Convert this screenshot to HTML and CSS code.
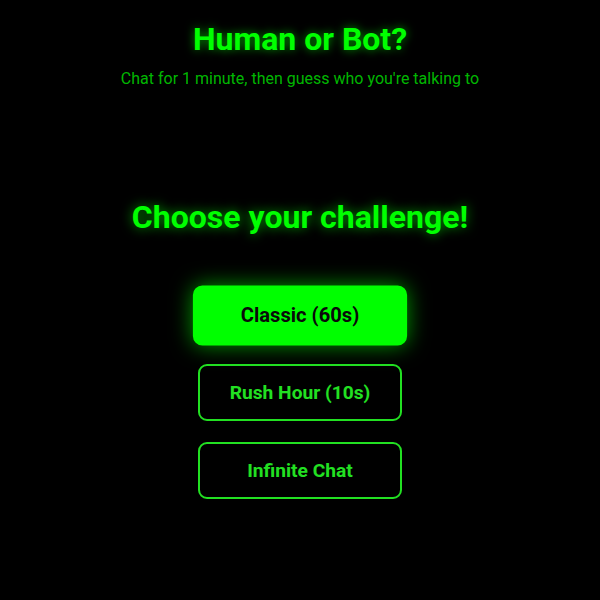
FILE: index.html
```html
<!DOCTYPE html>
<html lang="en">
<head>
<meta charset="utf-8">
<title>Human or Bot?</title>
<link rel="stylesheet" href="styles.css">
</head>
<body>
<header class="header">
  <h1 class="title">Human or Bot?</h1>
  <p class="subtitle">Chat for 1 minute, then guess who you're talking to</p>
</header>
<main class="main">
  <h2 class="challenge">Choose your challenge!</h2>
  <div class="modes">
    <button class="mode mode-active">Classic (60s)</button>
    <button class="mode">Rush Hour (10s)</button>
    <button class="mode">Infinite Chat</button>
  </div>
</main>
</body>
</html>
```
FILE: styles.css
```css
html, body {
  margin: 0;
  padding: 0;
  background: #000;
  height: 100%;
}
body {
  font-family: Roboto, "Liberation Sans", sans-serif;
  color: #00ff00;
  display: flex;
  flex-direction: column;
  align-items: center;
}
.header {
  padding-top: 21px;
  text-align: center;
}
.title {
  margin: 0;
  font-size: 32px;
  font-weight: 700;
  line-height: 37.5px;
  color: #00ff00;
  text-shadow: 0 0 10px rgba(0, 255, 0, 0.6);
}
.subtitle {
  margin: 10px 0 0;
  font-size: 16px;
  line-height: 19px;
  color: rgba(0, 255, 0, 0.72);
}
.main {
  display: flex;
  flex-direction: column;
  align-items: center;
  margin-top: 111px;
}
.challenge {
  margin: 0;
  font-size: 32px;
  font-weight: 700;
  line-height: 37.5px;
  color: #00ff00;
  text-shadow: 0 0 12px rgba(0, 255, 0, 0.65);
}
.modes {
  margin-top: 50.5px;
  display: flex;
  flex-direction: column;
  align-items: center;
  gap: 20.5px;
}
.mode {
  box-sizing: border-box;
  width: 204px;
  height: 57px;
  border: 2px solid #22e022;
  border-radius: 9px;
  background: transparent;
  color: #22e022;
  font-family: Roboto, "Liberation Sans", sans-serif;
  font-size: 19.2px;
  font-weight: 700;
  cursor: pointer;
}
.mode-active {
  background: #00ff00;
  border-color: #00ff00;
  color: #0a0a0a;
  transform: scale(1.05);
  box-shadow: 0 0 20px rgba(0, 255, 0, 0.6);
}
```
